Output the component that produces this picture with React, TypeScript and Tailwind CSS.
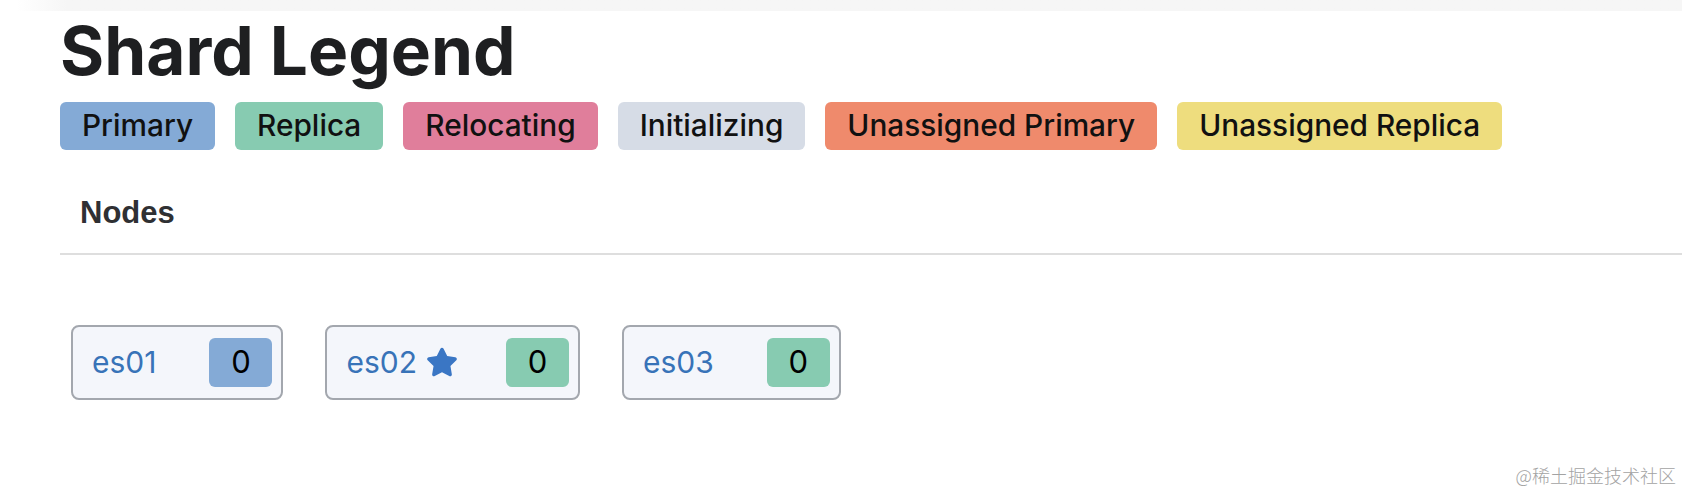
import { FaStar } from 'react-icons/fa';

const LEGEND = [
  { label: 'Primary', color: 'bg-[#84aad6]' },
  { label: 'Replica', color: 'bg-[#87cbb1]' },
  { label: 'Relocating', color: 'bg-[#e07e9b]' },
  { label: 'Initializing', color: 'bg-[#d6dce6]' },
  { label: 'Unassigned Primary', color: 'bg-[#ef8a6c]' },
  { label: 'Unassigned Replica', color: 'bg-[#eedd7e]' },
];

const NODES = [
  { name: 'es01', master: false, count: 0, color: 'bg-[#84aad6]' },
  { name: 'es02', master: true, count: 0, color: 'bg-[#87cbb1]' },
  { name: 'es03', master: false, count: 0, color: 'bg-[#87cbb1]' },
];

export default function App() {
  return (
    <div className="relative h-[490px] overflow-hidden bg-white font-['Inter',sans-serif]">
      {/* faded strip at the very top */}
      <div className="h-[11px] bg-gradient-to-r from-white from-[1%] to-[#f6f6f6] to-[4%]" />

      <div className="pl-[60px]">
        <h1 className="mt-[6px] text-[67.5px] leading-none font-bold text-[#1e1f21]">
          Shard Legend
        </h1>

        {/* legend badges */}
        <div className="mt-[17px] flex gap-[20px]">
          {LEGEND.map((item) => (
            <div
              key={item.label}
              className={`h-[48px] flex items-center px-[22px] rounded-[6px] text-[29.8px] font-medium text-[#111] ${item.color}`}
            >
              {item.label}
            </div>
          ))}
        </div>

        <div className="mt-[47px] pl-[20px] font-['Liberation_Sans',Arial,sans-serif] text-[31px] leading-none font-bold text-[#2f3033]">
          Nodes
        </div>
        <div className="mt-[25px] h-[2px] bg-[#dedede]" />

        {/* node cards */}
        <div className="mt-[70px] ml-[11px] flex gap-[42px]">
          {NODES.map((node) => (
            <div
              key={node.name}
              className="h-[75px] flex items-center gap-[53px] pl-[19px] pr-[9px] border-2 border-[#a3a7ae] rounded-[8px] bg-[#f4f6fb]"
            >
              <div className="flex items-center gap-[9px] text-[30px] text-[#3873b8]">
                <span>{node.name}</span>
                {node.master && <FaStar className="w-[32px] h-[32px] -mr-[5px] text-[#3a76c4]" />}
              </div>
              <div
                className={`w-[63px] h-[49px] flex items-center justify-center rounded-[6px] text-[31px] text-black ${node.color}`}
              >
                {node.count}
              </div>
            </div>
          ))}
        </div>
      </div>

      <div className="absolute right-[6px] bottom-[6px] text-[18px] leading-none font-light text-[#a3a3a3] font-['Noto_Sans_CJK_SC',sans-serif]">
        @稀土掘金技术社区
      </div>
    </div>
  );
}
